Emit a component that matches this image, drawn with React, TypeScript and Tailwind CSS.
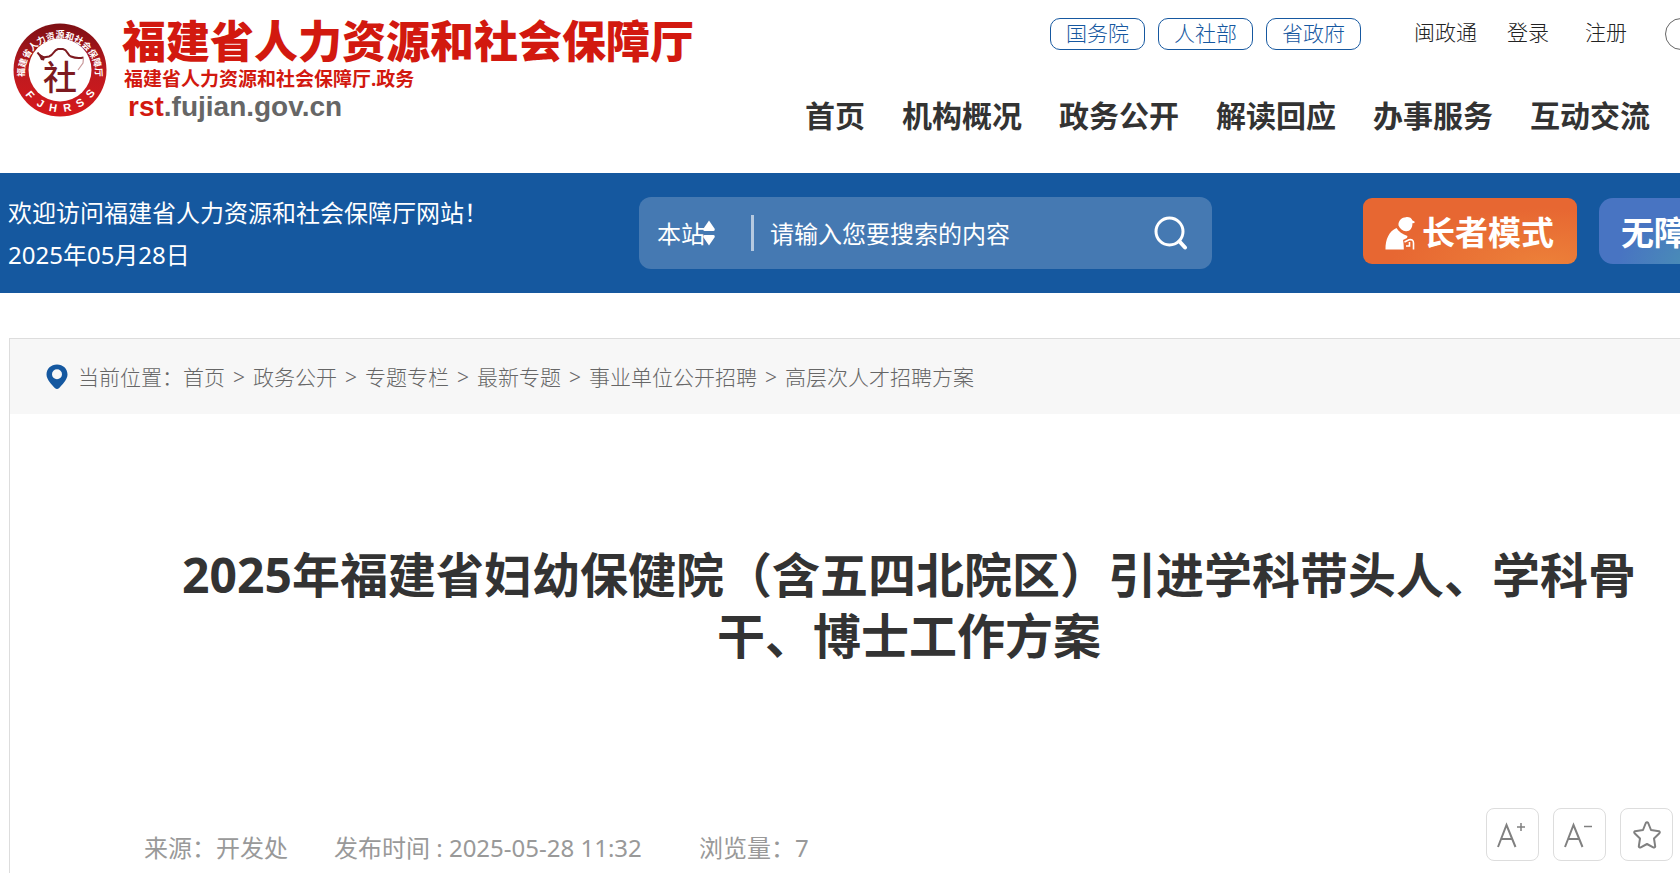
const departments = ['国务院', '人社部', '省政府'];
const navItems = ['首页', '机构概况', '政务公开', '解读回应', '办事服务', '互动交流'];
const crumbs = ['首页', '政务公开', '专题专栏', '最新专题', '事业单位公开招聘', '高层次人才招聘方案'];

function Seal() {
  return (
    <svg viewBox="0 0 94 94" className="h-[94px] w-[94px] shrink-0" aria-hidden="true">
      <defs>
        <linearGradient id="ring" x1="0" y1="0" x2="0" y2="1">
          <stop offset="0" stopColor="#7d0f14" />
          <stop offset="0.55" stopColor="#c01a1f" />
          <stop offset="1" stopColor="#d4181b" />
        </linearGradient>
        <path id="arcTop" d="M 11.5 51 A 35.5 35.5 0 1 1 82.5 51" />
      </defs>
      <circle cx="47" cy="47" r="46.5" fill="url(#ring)" />
      <circle cx="47" cy="47" r="31.5" fill="#fff" />
      <text fill="#fff" fontSize="9" fontWeight="700">
        <textPath href="#arcTop" startOffset="50%" textAnchor="middle">福建省人力资源和社会保障厅</textPath>
      </text>
      {[
        ['F', 16.5, 72.5, 50],
        ['J', 27, 81, 31],
        ['H', 40, 85.5, 10],
        ['R', 54.5, 85.5, -10],
        ['S', 67.5, 80.5, -31],
        ['S', 78, 71, -50],
      ].map(([letter, x, y, angle]) => (
        <text
          key={`${letter}${x}`}
          fill="#fff"
          fontSize="11"
          fontWeight="700"
          fontFamily="Liberation Sans, sans-serif"
          textAnchor="middle"
          dominantBaseline="middle"
          transform={`translate(${x} ${y}) rotate(${angle})`}
        >
          {letter}
        </text>
      ))}
      <path d="M24.5 29.5 Q28 35 33 34 L36 33.5 C41 32 40 27.5 45 26 H50 C55 27 54 32 58 33.5 Q64 36 70.5 34.5" fill="none" stroke="#7d1a20" strokeWidth="2" />
      <path d="M24.5 29.5 L28.5 32 L32 34 L31 37.5 L28 37 Z" fill="#7d1a20" />
      <path d="M70.5 34.5 L70 40 L65 47" fill="none" stroke="#c9999b" strokeWidth="1.2" />
      <text x="47" y="67" fill="#7d1a20" fontSize="34" fontWeight="500" textAnchor="middle">
        社
      </text>
    </svg>
  );
}

function ElderIcon() {
  return (
    <svg viewBox="0 0 30 34" className="h-[34px] w-[30px] shrink-0" fill="#fff" aria-hidden="true">
      <path d="M13.5 9.5 C13 4.5 17 1.2 21 1.2 C24 0.8 26.5 2 27.5 4.5 L29.5 5.5 V7 L27.4 7.2 C27.6 12 25 15.4 21 15.2 C17.5 15 15 12.5 13.5 9.5 Z" />
      <path d="M11.5 12 C13.5 15.5 17.5 18.5 22.5 20 L22 22 L18 24 C18.6 27 18.8 30 18.8 33.5 H0.5 C0.4 23 4 15.5 11.5 12 Z" />
      <path d="M19.5 26 L24 23.8 Q28.5 23 28.5 27 V33.5 M24.5 26 V30 H21" fill="none" stroke="#fff" strokeWidth="1.6" />
    </svg>
  );
}

function Header() {
  return (
    <header className="flex h-[173px] justify-between overflow-hidden bg-white">
      <div className="flex shrink-0 gap-[15px] pl-[13px] pt-[17px]">
        <div className="pt-[6px]">
          <Seal />
        </div>
        <div>
          <h1 className="text-[44px] font-black leading-[48px] text-[#d2190f]">福建省人力资源和社会保障厅</h1>
          <p className="pl-[2px] text-[19px] font-bold leading-7 text-[#d2190f]">
            福建省人力资源和社会保障厅.政务
          </p>
          <p className="pl-[6px] font-['Liberation_Sans',sans-serif] text-[28px] font-bold leading-7 text-[#666]">
            <span className="text-[#d2190f]">rst</span>.fujian.gov.cn
          </p>
        </div>
      </div>

      <div className="flex shrink-0 flex-col items-end">
        <div className="-mr-[50px] flex pt-[18px] text-[21px] font-light leading-7">
          <div className="flex gap-[13px]">
            {departments.map((name) => (
              <a key={name} href="#" className="h-8 w-[95px] rounded-[10px] border border-[#1658a0] text-center text-[#1658a0]">
                {name}
              </a>
            ))}
          </div>
          <a href="#" className="ml-[53px] text-[#222]">闽政通</a>
          <a href="#" className="ml-[30px] text-[#222]">登录</a>
          <a href="#" className="ml-9 text-[#222]">注册</a>
          <button type="button" aria-label="更多" className="ml-[38px] h-8 w-[65px] rounded-full border border-[#666]" />
        </div>
        <nav className="mr-[30px] mt-[43px] flex gap-[37px] text-[30px] font-bold leading-[46px] text-[#333]">
          {navItems.map((item) => (
            <a key={item} href="#">{item}</a>
          ))}
        </nav>
      </div>
    </header>
  );
}

function Banner() {
  return (
    <div className="flex h-[120px] overflow-hidden bg-[#15589f] text-white">
      <div className="w-[639px] shrink-0 pl-2 pt-[19px] text-[24px] leading-[42px]">
        <p>欢迎访问福建省人力资源和社会保障厅网站！</p>
        <p>2025年05月28日</p>
      </div>

      <form className="mt-6 flex h-[72px] w-[573px] shrink-0 items-center rounded-xl bg-[#4579b2] pl-[18px] pr-6 text-[24px]">
        <div className="relative flex items-center">
          <select aria-label="搜索范围" className="w-[94px] appearance-none bg-transparent pt-[2px] outline-none">
            <option>本站</option>
          </select>
          <svg viewBox="0 0 14 26" className="pointer-events-none absolute left-[45px] h-[26px] w-[14px]" fill="#fff" aria-hidden="true">
            <path d="M7 0.5 L12.8 9 Q13 11 11.5 11 H2.5 Q1 11 1.2 9 Z" />
            <path d="M7 25.5 L12.8 17 Q13 15 11.5 15 H2.5 Q1 15 1.2 17 Z" />
          </svg>
        </div>
        <div className="h-9 w-[3px] bg-[#b5c9e0]" />
        <input
          type="text"
          aria-label="搜索内容"
          placeholder="请输入您要搜索的内容"
          className="ml-4 min-w-0 flex-1 bg-transparent pt-[2px] outline-none placeholder:text-white placeholder:opacity-100"
        />
        <button type="submit" aria-label="搜索">
          <svg viewBox="0 0 34 34" className="h-[34px] w-[34px]" fill="none" stroke="#fff" strokeWidth="3" strokeLinecap="round" aria-hidden="true">
            <circle cx="15.5" cy="15.5" r="13.5" />
            <path d="M25.5 25.5 L31 31.5" strokeWidth="4" />
          </svg>
        </button>
      </form>

      <div className="ml-auto -mr-[132px] flex shrink-0 gap-[22px] pt-[25px] text-[33px] font-bold">
        <button
          type="button"
          className="flex h-[66px] w-[214px] items-center gap-[7px] rounded-[9px] bg-[#e76732] bg-[radial-gradient(ellipse_at_85%_100%,#ec8039_0%,#e76732_60%)] pl-[22px] pt-1"
        >
          <ElderIcon />
          长者模式
        </button>
        <button
          type="button"
          className="h-[66px] w-[213px] rounded-[14px] bg-[radial-gradient(ellipse_at_60%_100%,#4a9bb0_0%,#4874c2_60%)] pl-[22px] pt-1 text-left"
        >
          无障碍浏览
        </button>
      </div>
    </div>
  );
}

function Breadcrumb() {
  return (
    <nav className="flex h-[75px] items-center bg-[#f7f7f7] pl-9 text-[21px] font-light text-[#666]">
      <svg viewBox="0 0 22 25" className="mr-[10px] h-[25px] w-[22px]" aria-hidden="true">
        <path
          fillRule="evenodd"
          fill="#1558a0"
          d="M11 0.5 C17 0.5 21.5 4.8 21.5 10.5 C21.5 15.5 16 21 13.2 24 Q11 26 8.8 24 C6 21 0.5 15.5 0.5 10.5 C0.5 4.8 5 0.5 11 0.5 Z M11 5.2 A5 5 0 1 0 11 15.2 A5 5 0 1 0 11 5.2 Z"
        />
      </svg>
      <div className="flex pt-[2px]">
        <span>当前位置：</span>
        {crumbs.map((crumb, i) => (
          <span key={crumb} className="flex">
            {i > 0 && <span className="w-7 text-center">&gt;</span>}
            <a href="#">{crumb}</a>
          </span>
        ))}
      </div>
    </nav>
  );
}

function Article() {
  const tool = 'flex size-[53px] items-center justify-center rounded-lg border border-[#ddd] text-[#808080]';
  return (
    <main className="ml-[9px] mt-[45px] border-l border-t border-[#ddd]">
      <Breadcrumb />
      <h2 className="mt-[130px] pl-[148px] pr-[20px] text-center text-[48px] font-bold leading-[61px] text-[#333]">
        2025年福建省妇幼保健院（含五四北院区）引进学科带头人、学科骨干、博士工作方案
      </h2>
      <div className="mt-[142px] flex justify-between pb-3 pl-[134px] pr-[7px]">
        <div className="flex pt-[22px] text-[24px] leading-9 text-[#999]">
          <span className="w-[190px]">来源：开发处</span>
          <span className="w-[365px]">发布时间 : 2025-05-28 11:32</span>
          <span>浏览量：7</span>
        </div>
        <div className="flex gap-[14px]">
          <button type="button" aria-label="放大字体" className={tool}>
            <svg viewBox="0 0 53 53" className="size-[53px] shrink-0" fill="none" stroke="currentColor" strokeWidth="2" aria-hidden="true">
              <path d="M12 39 L20.5 17 L29.5 39 M15 31 H26.5" />
              <path d="M31 19 H39 M35 15 V23" strokeWidth="1.5" />
            </svg>
          </button>
          <button type="button" aria-label="缩小字体" className={tool}>
            <svg viewBox="0 0 53 53" className="size-[53px] shrink-0" fill="none" stroke="currentColor" strokeWidth="2" aria-hidden="true">
              <path d="M12 39 L20.5 17 L29.5 39 M15 31 H26.5" />
              <path d="M31 18.5 H39" strokeWidth="1.5" />
            </svg>
          </button>
          <button type="button" aria-label="收藏" className={tool}>
            <svg viewBox="0 0 28 28" className="size-7" fill="none" stroke="currentColor" strokeWidth="2" strokeLinejoin="round" aria-hidden="true">
              <path d="M12.8 2 Q14 0.6 15.2 2 L18 9 L26 10.2 Q27.4 11 26.4 12.2 L21 17.5 L22.2 25.4 Q21.8 27 20.2 26.4 L14 23 L7.8 26.4 Q6.2 27 5.8 25.4 L7 17.5 L1.6 12.2 Q0.6 11 2 10.2 L10 9 Z" />
            </svg>
          </button>
        </div>
      </div>
    </main>
  );
}

export default function App() {
  return (
    <div className="overflow-hidden bg-white font-['Noto_Sans','Noto_Sans_CJK_SC',sans-serif]">
      <Header />
      <Banner />
      <Article />
    </div>
  );
}
